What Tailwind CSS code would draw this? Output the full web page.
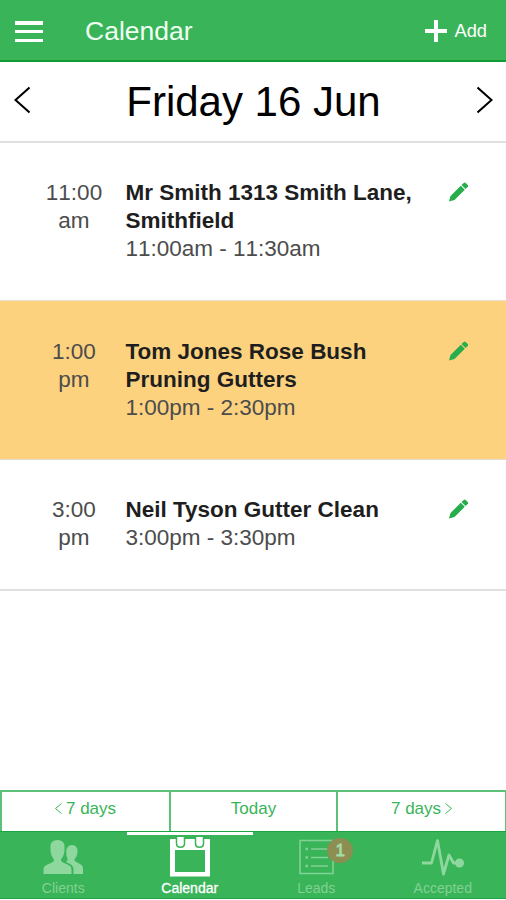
<!DOCTYPE html>
<html lang="en">
<head>
    <meta charset="UTF-8">
    <meta name="viewport" content="width=device-width, initial-scale=1.0">
    <title>Calendar</title>
    <script src="https://cdn.jsdelivr.net/npm/@tailwindcss/browser@4"></script>
    <style>
        body {
            font-family: 'Liberation Sans', Arial, sans-serif;
        }
    </style>
</head>
<body class="bg-white">
    <div class="h-[900px] w-[506px] flex flex-col overflow-hidden">
        <!-- Header -->
        <header class="h-[62px] shrink-0 bg-[#39b459] border-b-2 border-[#109b35] flex items-center pl-[14.5px] pr-[19px] text-white">
            <button class="w-7 h-[21px] flex flex-col justify-between mt-[3px]" aria-label="Menu">
                <span class="block w-full h-[3.500px] bg-white"></span>
                <span class="block w-full h-[3.500px] bg-white"></span>
                <span class="block w-full h-[3.500px] bg-white"></span>
            </button>
            <h1 class="ml-[42.5px] mt-0.5 text-[26.5px] leading-8 text-[#f0fff3]">Calendar</h1>
            <button class="ml-auto flex items-center gap-[7px] mt-0.5">
                <svg class="w-[22px] h-[22px]" viewBox="0 0 22 22" fill="none" stroke="white" stroke-width="4"><path d="M11 0v22M0 11h22"/></svg>
                <span class="text-[18.3px] leading-6">Add</span>
            </button>
        </header>

        <!-- Day picker -->
        <div class="h-[81px] shrink-0 border-b-2 border-[#e0e0e0] flex items-center justify-between pl-3.5 pr-[13px] pb-1 text-black">
            <svg class="w-4 h-7" viewBox="0 0 16 28" fill="none" stroke="currentColor" stroke-width="2"><path d="M15.5 1.5L1.500 14l14 12.500"/></svg>
            <h2 class="mt-1 text-[42px] leading-[48px]">Friday 16 Jun</h2>
            <svg class="w-4 h-7" viewBox="0 0 16 28" fill="none" stroke="currentColor" stroke-width="2"><path d="M.5 1.500l14 12.500L.5 26.500"/></svg>
        </div>

        <!-- Appointments -->
        <main class="grow text-[22.5px] leading-[28.2px] text-[#4c4c4c]">
            <div class="h-[158px] flex pt-9 border-b border-[#e8dfcf]">
                <div class="w-[70px] ml-[39px] text-center [font-kerning:none]">11:00<br>am</div>
                <div class="w-[300px] ml-[16.500px]">
                    <h3 class="font-bold text-[#1e1e1e]">Mr Smith 1313 Smith Lane, Smithfield</h3>
                    <p class="[font-kerning:none]">11:00am - 11:30am</p>
                </div>
                <svg class="w-5 h-5 ml-[22.500px] mt-[3px]" viewBox="0 0 20 20" fill="#27ad4b"><path d="M1 19.500l1.500-5.500L12.800 3.800l4 4L6.500 18zM13.500 3.100l2.200-2.100q1-1 2 0l2 2q1 1 0 2l-2.200 2.100z"/></svg>
            </div>
            <div class="h-[159px] flex pt-[37px] border-b border-[#e3dccf] bg-[#fcd27f]">
                <div class="w-[70px] ml-[39px] text-center">1:00<br>pm</div>
                <div class="w-[300px] ml-[16.500px]">
                    <h3 class="font-bold text-[#1e1e1e]">Tom Jones Rose Bush Pruning Gutters</h3>
                    <p>1:00pm - 2:30pm</p>
                </div>
                <svg class="w-5 h-5 ml-[22.500px] mt-[3px]" viewBox="0 0 20 20" fill="#27ad4b"><path d="M1 19.500l1.500-5.500L12.800 3.800l4 4L6.500 18zM13.500 3.100l2.200-2.100q1-1 2 0l2 2q1 1 0 2l-2.200 2.100z"/></svg>
            </div>
            <div class="h-[131px] flex pt-9 border-b-2 border-[#e0e0e0]">
                <div class="w-[70px] ml-[39px] text-center">3:00<br>pm</div>
                <div class="w-[300px] ml-[16.500px]">
                    <h3 class="font-bold text-[#1e1e1e]">Neil Tyson Gutter Clean</h3>
                    <p>3:00pm - 3:30pm</p>
                </div>
                <svg class="w-5 h-5 ml-[22.500px] mt-[3px]" viewBox="0 0 20 20" fill="#27ad4b"><path d="M1 19.500l1.500-5.500L12.800 3.800l4 4L6.500 18zM13.500 3.100l2.200-2.100q1-1 2 0l2 2q1 1 0 2l-2.200 2.100z"/></svg>
            </div>
        </main>

        <!-- Week buttons -->
        <div class="h-[41px] shrink-0 flex border-t-2 border-l-2 border-[#5cc177] text-[17px] leading-5 text-[#39b459]">
            <button class="w-[169px] border-r-2 border-[#5cc177] flex items-center justify-center gap-1 pb-1.5">
                <svg class="w-[7px] h-[11px]" viewBox="0 0 7 11" fill="none" stroke="currentColor"><path d="M6.500.5l-6 5 6 5"/></svg>
                7 days
            </button>
            <button class="w-[167px] border-r-2 border-[#5cc177] flex items-center justify-center pb-1.5">Today</button>
            <button class="w-[168px] border-r border-[#5cc177] flex items-center justify-center gap-1 pb-1.5">
                7 days
                <svg class="w-[7px] h-[11px]" viewBox="0 0 7 11" fill="none" stroke="currentColor"><path d="M.5.5l6 5-6 5"/></svg>
            </button>
        </div>

        <!-- Tab bar -->
        <nav class="h-[68px] shrink-0 grid grid-cols-4 bg-[#39b459] border-t border-b border-t-[#19a541] border-b-[#1da644] text-[14px] leading-4 text-[#82d194]">
            <a class="flex flex-col items-center pt-1">
                <svg class="w-10 h-10" viewBox="0 0 40 40" fill="#8ed89e">
                    <path d="M.5 38v-4.500q0-3.500 4-5l4.500-2q2.500-1.200 2-3Q7.500 19 7.500 14V10.500Q7.500 4 14.500 4t7 6.500V14q0 5-3.500 9.500-.5 1.800 2 3l4.500 2q4 1.500 4 5V38z"/>
                    <path d="M24.500 22.500Q23 20 23.300 15.500 23.500 9 29 9t5.500 6.500q0 4.500-3 7.500-.3 2 1 2.500l3.500 2q4 1.500 4 5V38h-9.500v-4.500q0-3.500-3.500-5.500l-4-2q2-1.500 1.500-3.500z"/>
                </svg>
                <span class="mt-1">Clients</span>
            </a>
            <a class="flex flex-col items-center border-t-3 border-white pt-0.5 text-white">
                <svg class="w-10 h-10" viewBox="0 0 40 40">
                    <path fill="white" fill-rule="evenodd" d="M0 2h40v37.500H0zM5 13v22h30V13z"/>
                    <path fill="white" stroke="#39b459" stroke-width="1.500" d="M6.500-1v7.500q0 3.800 4 3.800t4-3.800V-1M25.500-1v7.500q0 3.800 4 3.800t4-3.800V-1"/>
                </svg>
                <span class="mt-[3px] [-webkit-text-stroke:0.3px_white]">Calendar</span>
            </a>
            <a class="flex flex-col items-center pt-1">
                <div class="relative w-10 h-10">
                    <svg class="w-10 h-10" viewBox="0 0 40 40" fill="none" stroke="#82d194" stroke-width="1.600">
                        <path d="M4 4.500h33v33H4z"/>
                        <path d="M15 13h17M15 21.500h17M15 30h17"/>
                        <path stroke-width="2.500" d="M9.500 13h2.500M9.500 21.500h2.500M9.500 30h2.500"/>
                    </svg>
                    <span class="absolute left-[31px] top-0.5 w-[26px] h-[25px] rounded-full bg-[#8c8e52] text-[#a5dba8] text-[17px] leading-[25px] text-center [-webkit-text-stroke:0.8px_#a5dba8]">1</span>
                </div>
                <span class="mt-1">Leads</span>
            </a>
            <a class="flex flex-col items-center pt-1">
                <svg class="w-[42px] h-10" viewBox="0 0 42 40" fill="none" stroke="#8ed89e" stroke-width="2.800" stroke-linejoin="round">
                    <path d="M0 27h9.500L15.500 4.500l6 33.500L27 19l4.500 8H37"/>
                    <circle cx="37.500" cy="27" r="4.500" fill="#8ed89e" stroke="none"/>
                </svg>
                <span class="mt-1">Accepted</span>
            </a>
        </nav>
        <div class="h-px shrink-0 bg-white"></div>
    </div>
</body>
</html>
